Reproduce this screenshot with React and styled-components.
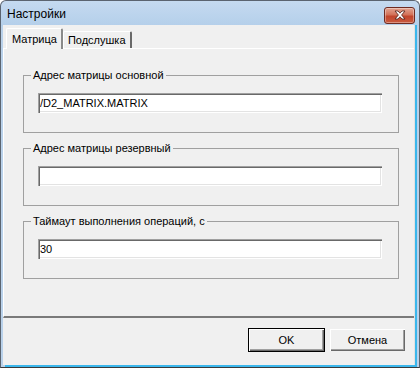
import React from 'react'
import styled, { createGlobalStyle } from 'styled-components'

const Global = createGlobalStyle`
  html, body { margin: 0; padding: 0; background: #ffffff; }
  body { font-family: "Liberation Sans", Arial, sans-serif; }
`

export default function App() {
  return (
    <>
      <Global />
      <Window>
        <TitleBar>
          <Title>Настройки</Title>
          <CloseButton aria-label="close">
            <svg width="14" height="10" viewBox="0 0 14 10">
              <path d="M2 1 L5 1 L7 3.2 L9 1 L12 1 L8.6 5 L12 9 L9 9 L7 6.8 L5 9 L2 9 L5.4 5 Z"
                fill="#ffffff" stroke="#5a2a22" strokeWidth="0.9" strokeLinejoin="round" />
            </svg>
          </CloseButton>
        </TitleBar>
        <Client>
          <TabStrip>
            <Tab active>Матрица</Tab>
            <Tab>Подслушка</Tab>
          </TabStrip>
          <TabPanel>
            <Group>
              <Legend>Адрес матрицы основной</Legend>
              <Field defaultValue="/D2_MATRIX.MATRIX" />
            </Group>
            <Group>
              <Legend>Адрес матрицы резервный</Legend>
              <Field defaultValue="" />
            </Group>
            <Group>
              <Legend>Таймаут выполнения операций, с</Legend>
              <Field defaultValue="30" />
            </Group>
          </TabPanel>
          <ButtonRow>
            <Button primary>OK</Button>
            <Button>Отмена</Button>
          </ButtonRow>
        </Client>
      </Window>
    </>
  )
}

const Window = styled.div`
width:420px;
height:368px;
box-sizing:border-box;
border:1px solid #5b6470;
border-bottom-color:#3a3a3a;
border-radius:6px 6px 0 0;
background: linear-gradient(#c5daf0, #b4cfea 25px, #b9d1ea 25px);
display:flex;
flex-direction:column;
overflow:hidden;
`;

const TitleBar = styled.div`
height:24px;
display:flex;
align-items:center;
justify-content:space-between;
padding:0 4px 0 6px;
`;

const Title = styled.span`
font-size:12px;
color:#000000;
margin-top:1px;
`;

const CloseButton = styled.div`
width:31px;
height:17px;
box-sizing:border-box;
margin-top:4px;
border:1px solid #6e2b22;
border-radius:3px;
background: linear-gradient(#e2a492, #d27158 45%, #c1452c 55%, #c95a3f);
box-shadow: inset 0 0 0 1px rgba(255,255,255,0.35);
display:flex;
align-items:center;
justify-content:center;
`;

const Client = styled.div`
flex:1;
margin:0 4px 2px 2px;
background:#f0f0f0;
border-right:1px solid #e2e2e2;
display:flex;
flex-direction:column;
box-shadow: 2px 0 0 #3bb7ec, 2px 2px 0 #3bb7ec;
`;

const TabStrip = styled.div`
display:flex;
align-items:flex-end;
height:23px;
padding-left:3px;
`;

const Tab = styled.div`
font-size:11px;
color:#000000;
box-sizing:border-box;
height:${p => (p.active ? '21px' : '17px')};
padding:${p => (p.active ? '4px 4px 0 5px' : '2px 4px 0 4px')};
border-top:1px solid #ffffff;
border-left:1px solid #ffffff;
border-right:2px solid ${p => (p.active ? '#8a8a8a' : '#696969')};
border-radius:2px 2px 0 0;
background:#f0f0f0;
margin-bottom:${p => (p.active ? '-1px' : '0')};
position:relative;
z-index:${p => (p.active ? 1 : 0)};
`;

const TabPanel = styled.div`
box-sizing:border-box;
height:270px;
border-top:1px solid #ffffff;
border-left:1px solid #ffffff;
border-bottom:2px solid #7a7a7a;
padding:19px 15px 0 19px;
display:flex;
flex-direction:column;
gap:8px;
`;

const Group = styled.fieldset`
margin:0;
box-sizing:border-box;
height:65px;
border:1px solid #a0a0a0;
padding:0 16px 0 14px;
min-width:0;
`;

const Legend = styled.legend`
font-size:11px;
line-height:14px;
color:#000000;
padding:0 2px;
margin-left:-7px;
`;

const Field = styled.input`
display:block;
box-sizing:border-box;
width:100%;
height:20px;
margin-top:11px;
padding:0 2px;
font-family:"Liberation Sans", Arial, sans-serif;
font-size:11px;
color:#000000;
background:#ffffff;
border:none;
box-shadow: inset 1px 1px 0 #a0a0a0, inset 2px 2px 0 #696969, inset -1px -1px 0 #ffffff, inset -2px -2px 0 #e3e3e3;
outline:none;
`;

const ButtonRow = styled.div`
flex:1;
display:flex;
justify-content:flex-end;
align-items:flex-start;
gap:5px;
padding:10px 9px 0 0;
`;

const Button = styled.button`
box-sizing:border-box;
width:${p => (p.primary ? '77px' : '75px')};
height:${p => (p.primary ? '24px' : '22px')};
margin-top:${p => (p.primary ? '0' : '1px')};
font-family:"Liberation Sans", Arial, sans-serif;
font-size:11px;
color:#000000;
background:#f0f0f0;
padding:0;
border:${p => (p.primary ? '1px solid #000000' : 'none')};
box-shadow: inset 1px 1px 0 #ffffff, inset -1px -1px 0 #696969, inset -2px -2px 0 #a0a0a0;
`;
